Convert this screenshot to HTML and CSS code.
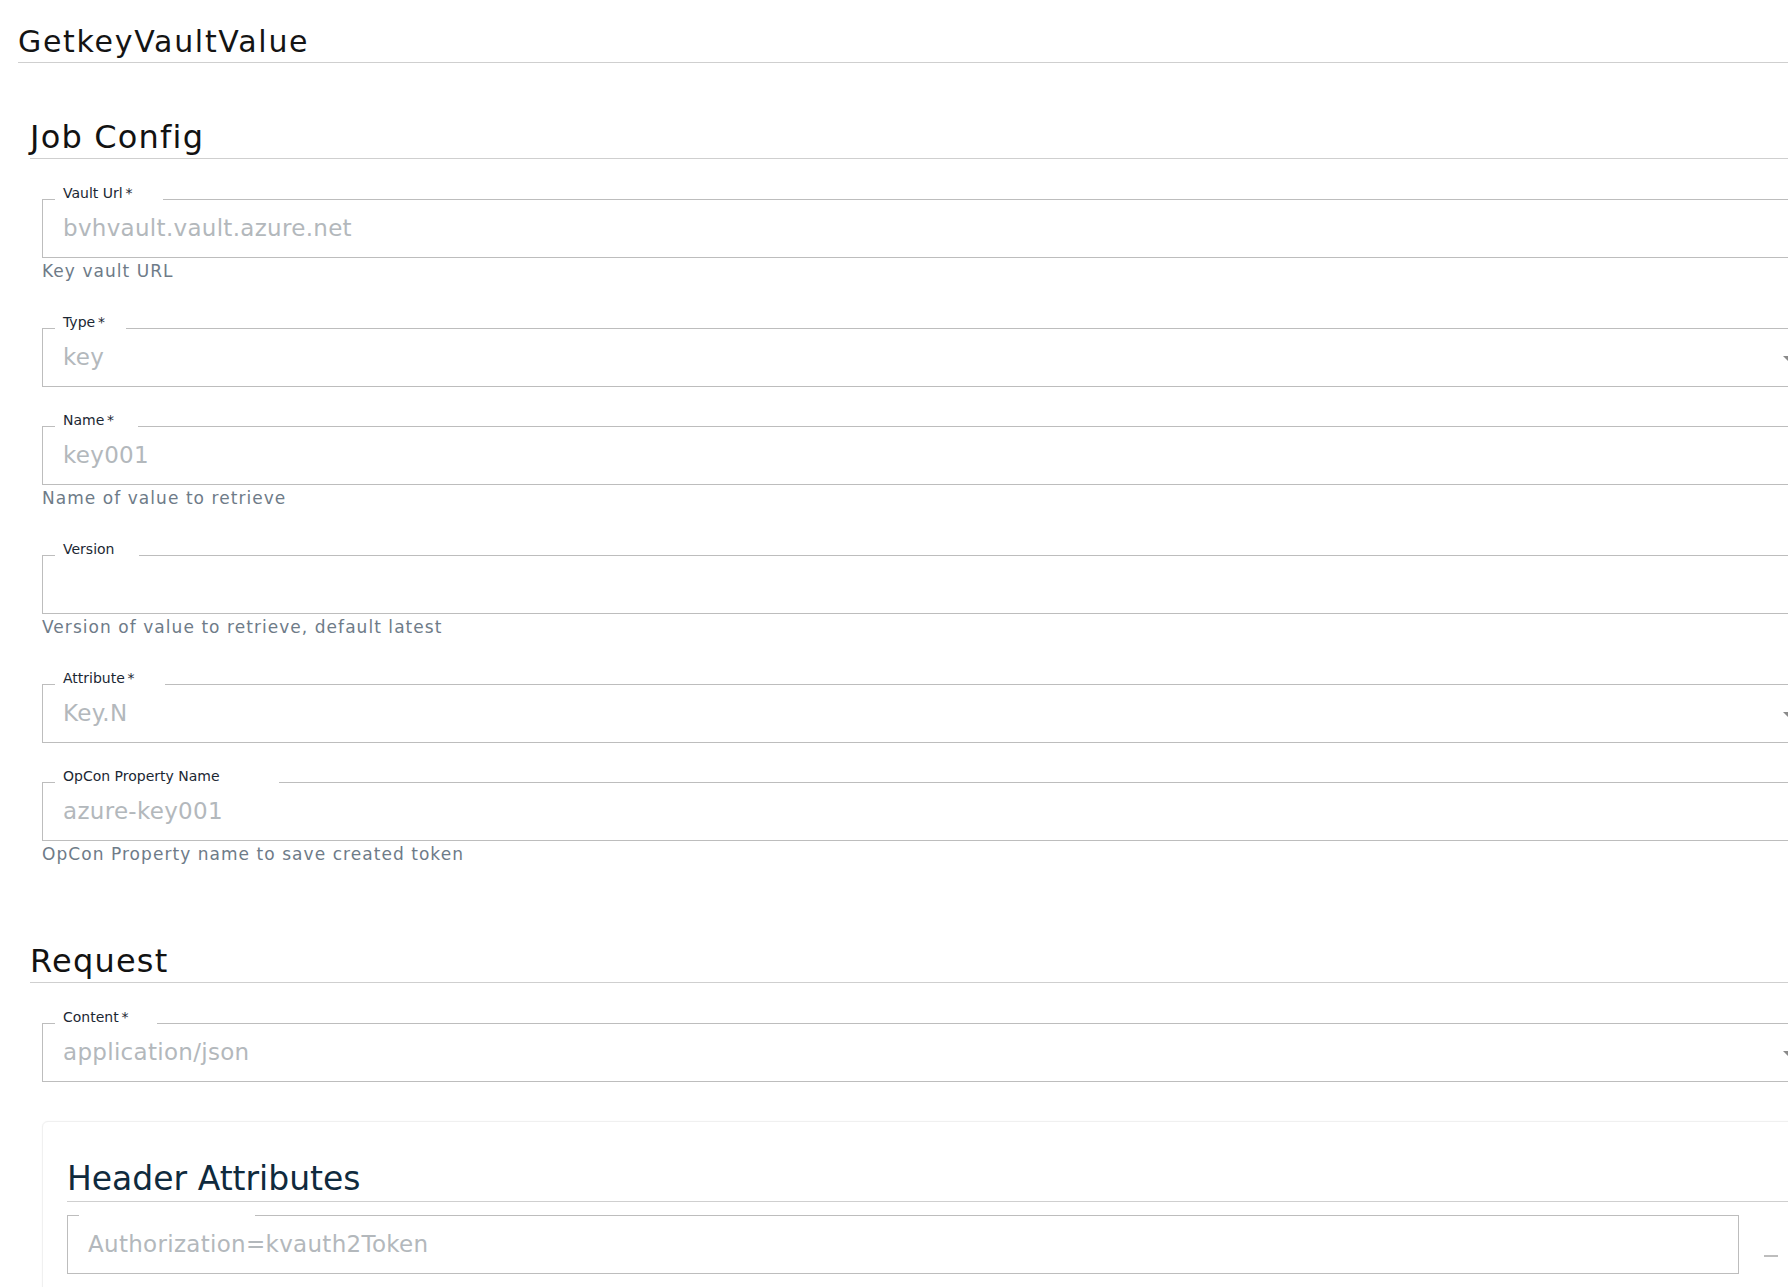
FILE: index.html
```html
<!DOCTYPE html>
<html lang="en">
<head>
<meta charset="utf-8">
<title>GetkeyVaultValue</title>
<link rel="stylesheet" href="styles.css">
</head>
<body>
<div class="page">
  <h1 class="page-title">GetkeyVaultValue</h1>

  <section class="section section-job">
    <h2 class="section-title">Job Config</h2>
    <div class="fields">
      <div class="field">
        <div class="outline-top"><span class="tick"></span><span class="label" data-l="Vault Url&thinsp;*">Vault Url&thinsp;*</span><span class="rest"></span></div>
        <div class="box"><div class="value">bvhvault.vault.azure.net</div></div>
        <div class="helper">Key vault URL</div>
      </div>

      <div class="field">
        <div class="outline-top"><span class="tick"></span><span class="label" data-l="Type&thinsp;*">Type&thinsp;*</span><span class="rest"></span></div>
        <div class="box box-select"><div class="value">key</div><span class="caret"></span></div>
      </div>

      <div class="field">
        <div class="outline-top"><span class="tick"></span><span class="label" data-l="Name&thinsp;*">Name&thinsp;*</span><span class="rest"></span></div>
        <div class="box"><div class="value">key001</div></div>
        <div class="helper">Name of value to retrieve</div>
      </div>

      <div class="field">
        <div class="outline-top"><span class="tick"></span><span class="label" data-l="Version">Version</span><span class="rest"></span></div>
        <div class="box"><div class="value"></div></div>
        <div class="helper">Version of value to retrieve, default latest</div>
      </div>

      <div class="field">
        <div class="outline-top"><span class="tick"></span><span class="label" data-l="Attribute&thinsp;*">Attribute&thinsp;*</span><span class="rest"></span></div>
        <div class="box box-select"><div class="value">Key.N</div><span class="caret"></span></div>
      </div>

      <div class="field">
        <div class="outline-top"><span class="tick"></span><span class="label" data-l="OpCon Property Name">OpCon Property Name</span><span class="rest"></span></div>
        <div class="box"><div class="value">azure-key001</div></div>
        <div class="helper">OpCon Property name to save created token</div>
      </div>
    </div>
  </section>

  <section class="section section-request">
    <h2 class="section-title">Request</h2>
    <div class="fields">
      <div class="field">
        <div class="outline-top"><span class="tick"></span><span class="label" data-l="Content&thinsp;*">Content&thinsp;*</span><span class="rest"></span></div>
        <div class="box box-select"><div class="value">application/json</div><span class="caret"></span></div>
      </div>

      <div class="card">
        <h3 class="card-title">Header Attributes</h3>
        <div class="attr-row">
          <div class="field field-attr">
            <div class="outline-top outline-short"><span class="tick tick-short"></span><span class="notch-empty"></span><span class="rest"></span></div>
            <div class="box"><div class="value">Authorization=kvauth2Token</div></div>
          </div>
          <span class="remove-btn" aria-label="remove"></span>
        </div>
      </div>
    </div>
  </section>
</div>
</body>
</html>
```

FILE: styles.css
```css
html, body {
  margin: 0;
  padding: 0;
  overflow: hidden;
  background: #ffffff;
}

body {
  font-family: "DejaVu Sans", "Liberation Sans", sans-serif;
  color: #151515;
}

.page {
  width: 1812px;
  box-sizing: border-box;
  padding: 22px 0 0 18px;
}

.page-title {
  margin: 0;
  font-size: 30px;
  font-weight: normal;
  line-height: 40px;
  letter-spacing: 1.7px;
  color: #141414;
  border-bottom: 1px solid #cfcfcf;
}

.section {
  padding-left: 12px;
}

.section-job {
  margin-top: 53px;
}

.section-request {
  margin-top: 68px;
}

.section-title {
  margin: 0;
  font-size: 32px;
  font-weight: normal;
  line-height: 42px;
  letter-spacing: 1.2px;
  color: #121212;
  border-bottom: 1px solid #cfcfcf;
}

.fields {
  padding-left: 12px;
  margin-top: 21px;
}

.field {
  margin-bottom: 20px;
}

.outline-top {
  display: flex;
  align-items: flex-end;
  height: 20px;
}

.tick,
.rest {
  align-self: stretch;
  border-bottom: 1px solid #bdbdbd;
}

.tick {
  width: 13px;
  flex: none;
}

.rest {
  flex: 1;
}

.label {
  flex: none;
  margin-bottom: -5px;
  padding: 0 7px 0 8px;
  font-size: 14px;
  line-height: 16px;
  color: #1b2733;
  white-space: nowrap;
}

.label::after {
  content: attr(data-l);
  font-size: 0.333em;
  visibility: hidden;
}

.box {
  position: relative;
  height: 58px;
  box-sizing: border-box;
  border: 1px solid #bdbdbd;
  border-top: none;
}

.value {
  padding-left: 20px;
  font-size: 23px;
  line-height: 57px;
  letter-spacing: 0.3px;
  color: #b3b8bc;
  white-space: nowrap;
}

.caret {
  position: absolute;
  right: 18px;
  top: 50%;
  margin-top: -2px;
  width: 0;
  height: 0;
  border-left: 5px solid transparent;
  border-right: 5px solid transparent;
  border-top: 5px solid #8a8a8a;
}

.helper {
  font-size: 17px;
  line-height: 26px;
  letter-spacing: 1.05px;
  color: #6e7b88;
  padding-bottom: 5px;
}

.card {
  margin-top: 39px;
  border: 1px solid #f0f0f0;
  border-radius: 6px;
  box-shadow: 0 0 2px rgba(0, 0, 0, 0.04);
  padding: 35px 0 30px 24px;
  background: #ffffff;
}

.card-title {
  margin: 0;
  font-size: 33px;
  font-weight: normal;
  line-height: 44px;
  color: #0f2a3d;
  border-bottom: 1px solid #cfcfcf;
}

.attr-row {
  display: flex;
  gap: 25px;
  padding-right: 33px;
}

.field-attr {
  flex: 1;
  margin-bottom: 0;
}

.outline-short {
  height: 14px;
}

.tick-short {
  width: 12px;
}

.notch-empty {
  flex: none;
  width: 176px;
}

.remove-btn {
  flex: none;
  align-self: flex-end;
  width: 14px;
  height: 2px;
  margin-bottom: 17px;
  background: #bdbdbd;
}
```
